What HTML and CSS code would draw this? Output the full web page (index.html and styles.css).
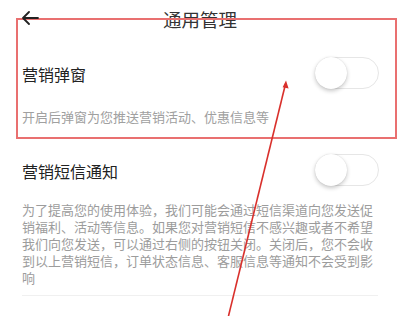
FILE: index.html
```html
<!DOCTYPE html>
<html lang="zh-CN">
<head>
<meta charset="utf-8">
<link rel="stylesheet" href="styles.css">
</head>
<body>
<div class="page">
  <header class="topbar">
    <svg class="back" width="18" height="14" viewBox="0 0 18 14"><path d="M17 7H2M8 1L2 7l6 6" fill="none" stroke="#222" stroke-width="1.8" stroke-linecap="round" stroke-linejoin="round"/></svg>
    <h1 class="title">通用管理</h1>
  </header>

  <section class="section first">
    <div class="row">
      <span class="label">营销弹窗</span>
      <span class="switch"><span class="knob"></span></span>
    </div>
    <p class="hint">开启后弹窗为您推送营销活动、优惠信息等</p>
  </section>

  <section class="section second">
    <div class="row">
      <span class="label">营销短信通知</span>
      <span class="switch"><span class="knob"></span></span>
    </div>
    <p class="desc">为了提高您的使用体验，我们可能会通过短信渠道向您发送促销福利、活动等信息。如果您对营销短信不感兴趣或者不希望我们向您发送，可以通过右侧的按钮关闭。关闭后，您不会收到以上营销短信，订单状态信息、客服信息等通知不会受到影响</p>
    <div class="divider"></div>
  </section>

  <div class="highlight"></div>
  <svg class="pointer" width="400" height="316" viewBox="0 0 400 316">
    <line x1="228" y1="318" x2="285.5" y2="84" stroke="#d9302c" stroke-width="1.6"/>
    <path d="M286 80.5 L288.6 88.6 L282.6 87.2 Z" fill="#d9302c"/>
  </svg>
</div>
</body>
</html>
```
FILE: styles.css
```css
html, body {
  margin: 0;
  padding: 0;
  background: #fff;
}
body {
  font-family: "Noto Sans CJK SC", "Noto Sans", sans-serif;
  color: #222;
}
.page {
  position: relative;
  width: 400px;
  height: 316px;
  overflow: hidden;
}
.topbar {
  height: 38px;
  display: flex;
  align-items: center;
  justify-content: center;
  position: relative;
}
.back {
  position: absolute;
  left: 21px;
  top: 11px;
  z-index: 3;
}
.title {
  margin: 0;
  font-size: 18.5px;
  font-weight: 400;
  color: #333;
  line-height: 38px;
}
.section {
  padding: 0 22px;
}
.row {
  display: flex;
  align-items: center;
  justify-content: space-between;
}
.first .row {
  height: 70px;
}
.second .row {
  height: 50px;
}
.label {
  font-size: 16px;
  color: #222;
  line-height: 20px;
  position: relative;
  top: 1px;
}
.switch {
  box-sizing: border-box;
  width: 64px;
  height: 32px;
  border-radius: 16px;
  border: 1px solid #e6e6e6;
  background: #fff;
  display: flex;
  align-items: center;
  margin-right: -1px;
}
.knob {
  width: 32px;
  height: 32px;
  margin-left: -1px;
  border-radius: 50%;
  background: #fff;
  box-shadow: 0 2px 4px rgba(0,0,0,0.22), 0 0 1px rgba(0,0,0,0.15);
}
.hint {
  margin: 0;
  font-size: 13px;
  line-height: 18px;
  color: #a0a0a0;
  padding-bottom: 19px;
}
.desc {
  margin: 6px 0 0;
  width: 356px;
  font-size: 13px;
  line-height: 17px;
  color: #9c9c9c;
}
.divider {
  margin-top: 9px;
  height: 1px;
  background: #f0f0f0;
}
.highlight {
  position: absolute;
  left: 16px;
  top: 18px;
  width: 381px;
  height: 121px;
  box-sizing: border-box;
  border: 2px solid #e97070;
  z-index: 2;
}
.pointer {
  position: absolute;
  left: 0;
  top: 0;
  z-index: 2;
}
```
